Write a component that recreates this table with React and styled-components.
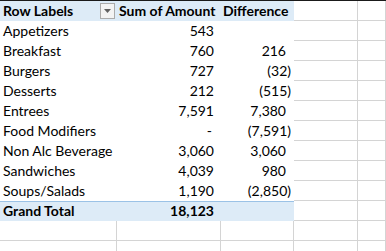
import React from "react";
import styled, { createGlobalStyle } from "styled-components";

const Global = createGlobalStyle`
  html, body { margin: 0; padding: 0; background: #fff; }
  body { font-family: Lato, "Open Sans", sans-serif; color: #000; }
`;

const Sheet = styled.div`
  width: 386px;
  height: 251px;
  overflow: hidden;
  border-top: 1px solid #1a1a1a;
  display: grid;
  grid-template-columns: 117px 104px 73px 64px 1fr;
  grid-auto-rows: 20px;
`;

const Cell = styled.div`
  box-sizing: border-box;
  height: 20px;
  font-size: 14px;
  line-height: 18px;
  white-space: nowrap;
  overflow: visible;
  display: flex;
  align-items: flex-end;
  justify-content: ${(p) => (p.$right ? "flex-end" : "flex-start")};
  padding-left: ${(p) => (p.$right ? 0 : p.$pl ?? 3)}px;
  padding-right: ${(p) => p.$pr ?? 0}px;
  padding-bottom: 1px;
  font-weight: ${(p) => (p.$bold ? 700 : 400)};
  background: ${(p) => (p.$band ? "#ddebf7" : "#fff")};
  border-bottom: ${(p) =>
    p.$grid ? "1px solid #d4d4d4" : p.$bottom ? `1px solid ${p.$bottom}` : "none"};
  border-right: ${(p) => (p.$grid ? "1px solid #d4d4d4" : "none")};
  border-top: ${(p) => (p.$top ? `1px solid ${p.$top}` : "none")};
`;

const LabelWrap = styled.div`
  display: flex;
  align-items: center;
  justify-content: space-between;
  width: 100%;
  height: 100%;
`;

const FilterButton = styled.div`
  box-sizing: border-box;
  width: 15px;
  height: 16px;
  margin-right: 2px;
  margin-top: 1px;
  border: 1px solid #ababab;
  background: #f3f3f3;
  display: flex;
  align-items: center;
  justify-content: center;
`;

const rows = [
  ["Appetizers", "543", ""],
  ["Breakfast", "760", "216"],
  ["Burgers", "727", "(32)"],
  ["Desserts", "212", "(515)"],
  ["Entrees", "7,591", "7,380"],
  ["Food Modifiers", "-", "(7,591)"],
  ["Non Alc Beverage", "3,060", "3,060"],
  ["Sandwiches", "4,039", "980"],
  ["Soups/Salads", "1,190", "(2,850)"],
];

const pad = (v, base) => (v.startsWith("(") ? base - 5 : v === "-" ? base + 2 : base);

export default function App() {
  return (
    <>
      <Global />
      <Sheet>
        <Cell $band $bold>
          <LabelWrap>
            <span>Row Labels</span>
            <FilterButton>
              <svg width="7" height="4" viewBox="0 0 7 4">
                <path d="M0 0 H7 L3.5 4 Z" fill="#606060" />
              </svg>
            </FilterButton>
          </LabelWrap>
        </Cell>
        <Cell $band $bold $pl={2}>Sum of Amount</Cell>
        <Cell $band $bold $pl={2}>Difference</Cell>
        <Cell $grid />
        <Cell $grid />
        {rows.map(([label, amt, diff]) => (
          <React.Fragment key={label}>
            <Cell>{label}</Cell>
            <Cell $right $pr={pad(amt, 7)}>{amt}</Cell>
            <Cell $right $pr={pad(diff, 8)}>{diff}</Cell>
            <Cell $grid />
            <Cell $grid />
          </React.Fragment>
        ))}
        <Cell $band $bold $top="#9bc2e6">Grand Total</Cell>
        <Cell $band $bold $right $pr={7} $top="#9bc2e6">18,123</Cell>
        <Cell $band $top="#9bc2e6" />
        <Cell $grid />
        <Cell $grid />
        {[0, 1].map((r) => (
          <React.Fragment key={r}>
            <Cell $grid />
            <Cell $grid />
            <Cell $grid />
            <Cell $grid />
            <Cell $grid />
          </React.Fragment>
        ))}
      </Sheet>
    </>
  );
}
